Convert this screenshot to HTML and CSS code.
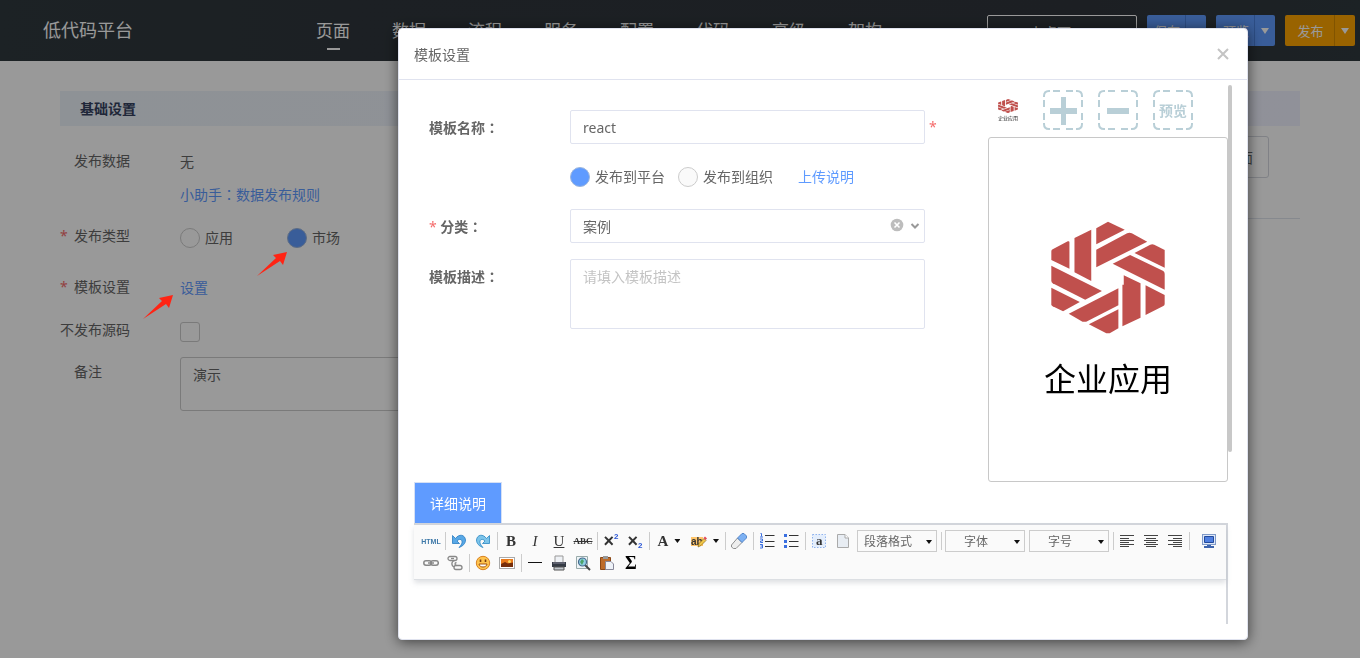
FILE: index.html
```html
<!DOCTYPE html>
<html lang="zh-CN">
<head>
<meta charset="utf-8">
<title>低代码平台</title>
<link rel="stylesheet" href="styles.css">
</head>
<body>
<svg class="defs" aria-hidden="true">
  <symbol id="logo" viewBox="66 31 340 339" preserveAspectRatio="none">
    <g fill="#c0504d">
      <path d="M67 122Q67 118 71 116L116 92Q121 90 121 95V174L67 148Z"/>
      <path d="M136 82L186 57V211L136 185Z"/>
      <path d="M201 53L236 33L286 57L201 101Z"/>
      <path d="M201 117L293 68Q300 64 307 68L353 93L201 170Z"/>
      <path d="M315 127L362 102Q368 99 374 102L405 118V171Z"/>
      <path d="M250 159L302 133L401 181Q405 184 405 189V237Z"/>
      <path d="M67 165L218 241L168 267L71 218Q67 215 67 210Z"/>
      <path d="M67 231L152 274L102 302L71 287Q67 285 67 281Z"/>
      <path d="M119 309L267 233V284L171 333H160Z"/>
      <path d="M179 341L267 296V353L241 368H231Z"/>
      <path d="M283 194L333 218V321L279 347V222H283Z"/>
      <path d="M348 224L405 253V280Q405 284 401 286L348 313Z"/>
    </g>
  </symbol>
  <symbol id="dashbox" viewBox="0 0 40 40">
    <path fill="none" stroke="#b9cfd7" stroke-width="2" d="M1 7V6Q1 1 6 1H7M10 1h7M23 1h7M33 1H34Q39 1 39 6V7M39 10v7M39 23v7M39 33V34Q39 39 34 39H33M30 39h-7M17 39h-7M7 39H6Q1 39 1 34V33M1 30v-7M1 17v-7"/>
  </symbol>
</svg>

<div class="page">
  <header class="topbar">
    <div class="brand">低代码平台</div>
    <nav class="nav">
      <a class="active" href="#">页面</a><a href="#">数据</a><a href="#">流程</a><a href="#">服务</a><a href="#">配置</a><a href="#">代码</a><a href="#">高级</a><a href="#">架构</a>
    </nav>
    <div class="actions">
      <select class="page-select" aria-label="页面选择"><option>小桌面</option></select>
      <div class="split"><button>保存</button><button aria-label="更多保存"><i class="caret"></i></button></div>
      <div class="split"><button>预览</button><button aria-label="更多预览"><i class="caret"></i></button></div>
      <div class="split publish"><button>发布</button><button aria-label="更多发布"><i class="caret"></i></button></div>
    </div>
  </header>
  <main class="content">
    <h2 class="section">基础设置</h2>
    <div class="columns">
      <form class="settings">
        <div class="row data-row"><span class="label">发布数据</span><div class="value"><div>无</div><a href="#">小助手<span class="colon" lang="zh-TW">：</span>数据发布规则</a></div></div>
        <div class="row type-row"><span class="label required">发布类型</span>
          <div class="value choices"><label><input type="radio" name="type">应用</label><label><input type="radio" name="type" checked>市场</label></div></div>
        <div class="row tpl-row"><span class="label required">模板设置</span><div class="value"><a href="#">设置</a></div></div>
        <div class="row src-row"><label class="label wide" for="nosrc">不发布源码</label><div class="value choices"><input type="checkbox" id="nosrc"></div></div>
        <div class="row"><label class="label" for="note">备注</label><div class="value"><textarea id="note">演示</textarea></div></div>
      </form>
      <div class="extra"><div class="extra-box">页面</div></div>
    </div>
  </main>
</div>

<div class="overlay"></div>
<svg class="pointer market-pointer" viewBox="0 0 30 25" aria-hidden="true"><path fill="#ff2414" d="M0 24L19 6L16 3L30 0L26 13L23 9Z"/></svg>
<svg class="pointer setup-pointer" viewBox="0 0 30 25" aria-hidden="true"><path fill="#ff2414" d="M0 24L19 6L16 3L30 0L26 13L23 9Z"/></svg>

<section class="modal" role="dialog" aria-labelledby="dlg-title">
  <header class="modal-head">
    <h1 id="dlg-title">模板设置</h1>
    <button class="close" aria-label="关闭"><svg viewBox="0 0 12 12"><path d="M1 1L11 11M11 1L1 11" stroke="#c4c4c4" stroke-width="2" fill="none"/></svg></button>
  </header>
  <div class="modal-body">
    <div class="upper">
      <form class="fields">
        <div class="field"><label for="name">模板名称<span class="colon" lang="zh-TW">：</span></label><input class="box" id="name" type="text" value="react"><span class="star">*</span></div>
        <div class="field"><span></span>
          <div class="choices scope"><label><input type="radio" name="scope" checked>发布到平台</label><label><input type="radio" name="scope">发布到组织</label><a href="#">上传说明</a></div></div>
        <div class="field"><label for="cat"><span class="star">*</span> 分类<span class="colon" lang="zh-TW">：</span></label>
          <div class="select-wrap"><select class="box" id="cat"><option>案例</option></select>
            <svg class="select-icons" viewBox="0 0 32 14" aria-hidden="true"><circle cx="7" cy="7" r="6.300" fill="#bdbdbd"/><path d="M4.500 4.500l5 5M9.500 4.500l-5 5" stroke="#fff" stroke-width="1.600"/><path d="M21.500 6l3.500 3.500L28.500 6" fill="none" stroke="#999" stroke-width="2"/></svg></div></div>
        <div class="field"><label for="desc">模板描述<span class="colon" lang="zh-TW">：</span></label><textarea class="box" id="desc" placeholder="请填入模板描述"></textarea></div>
      </form>
      <aside class="gallery">
        <div class="thumbs">
          <button class="thumb" aria-label="企业应用"><svg><use href="#logo"/></svg><span>企业应用</span></button>
          <button aria-label="添加"><svg viewBox="0 0 40 40"><use href="#dashbox"/><path fill="#b9cfd7" d="M7 18h11V7h5v11h11v6H23v11h-5V24H7z"/></svg></button>
          <button aria-label="删除"><svg viewBox="0 0 40 40"><use href="#dashbox"/><path fill="#b9cfd7" d="M9 18h22v6H9z"/></svg></button>
          <button class="preview"><svg viewBox="0 0 40 40"><use href="#dashbox"/></svg><span>预览</span></button>
        </div>
        <div class="picture"><svg><use href="#logo"/></svg><span>企业应用</span></div>
      </aside>
    </div>
    <button class="tab">详细说明</button>
    <div class="editor">
      <div class="toolbar">
        <div class="tools">
          <button class="html">HTML</button><i class="sep"></i>
          <button aria-label="撤销"><svg viewBox="0 0 16 16"><path d="M1.500 2.500v8h7L6 8C8 5.500 11.500 6 11 9.500c-.2 1.800-1.500 3.500-3 5 4-1.500 6.500-4 6.500-7.500C14 1.500 8 .5 4.500 5.500z" fill="#58a8e6" stroke="#2a7cc2" stroke-width=".8"/></svg></button>
          <button aria-label="重做"><svg viewBox="0 0 16 16"><path d="M14.500 2.500v8h-7L10 8C8 5.500 4.500 6 5 9.500c.2 1.800 1.500 3.500 3 5-4-1.500-6.500-4-6.500-7.500C2 1.500 8 .5 11.500 5.500z" fill="#7cc4ea" stroke="#2a87c2" stroke-width=".8"/></svg></button>
          <i class="sep"></i>
          <button class="serif"><b>B</b></button><button class="serif"><em>I</em></button><button class="serif"><u>U</u></button><button class="serif abc"><s>ABC</s></button>
          <i class="sep"></i>
          <button class="script-btn"><b>×</b><sup>2</sup></button><button class="script-btn"><b>×</b><sub>2</sub></button>
          <i class="sep"></i>
          <button class="serif drop">A<i class="caret dark"></i></button>
          <button class="drop" aria-label="背景色"><svg viewBox="0 0 16 16"><path fill="#ffc56b" d="M0 4h12v9H0z"/><text x="0" y="12" class="ab">ab</text><path d="M7 14l1-3.500 5-5 2 2-5 5z" fill="#f0c648" stroke="#8a6a1c" stroke-width=".7"/><path d="M12.500 5L14 3.500l2 2L14.500 7z" fill="#e0485a"/></svg><i class="caret dark"></i></button>
          <i class="sep"></i>
          <button aria-label="清除格式"><svg viewBox="0 0 16 16"><path d="M.5 12L6.500 5l4.500 4.500L5 15.500H2.500L.5 14z" fill="#eee" stroke="#777" stroke-width=".8"/><path d="M6.500 5l4.500-4.500h2l2.500 2.500v2L11 9.500z" fill="#7db1f3" stroke="#4177c0" stroke-width=".8"/></svg></button>
          <i class="sep"></i>
          <button aria-label="编号列表"><svg viewBox="0 0 16 16"><path d="M6 2.500h9.500M6 8.500h9.500M6 13.500h9.500" stroke="#333"/><path d="M1.500.5h1v3M1 4h3M1 6h2.500v2H1.500v1.500H4M1 11.500h2.500v3.500H1M1.500 13h2" fill="none" stroke="#3a6fe0"/></svg></button>
          <button aria-label="项目列表"><svg viewBox="0 0 16 16"><path d="M6 2.500h9.500M6 8.500h9.500M6 13.500h9.500" stroke="#333"/><path d="M1 1h3v3H1zM1 7h3v3H1zM1 12h3v3H1z" fill="#3a6fe0"/></svg></button>
          <i class="sep"></i>
          <button aria-label="全选"><svg viewBox="0 0 16 16"><rect x="1.500" y="1.500" width="13" height="13" fill="#e4eefc" stroke="#8fb3ee" stroke-dasharray="1.500 1.500"/><text x="5" y="12" class="sel">a</text></svg></button>
          <button aria-label="新页"><svg viewBox="0 0 16 16"><path d="M2.500 1.500H10L13.500 5v9.500h-11z" fill="#e8edf3" stroke="#aaa"/><path d="M10 1.500V5h3.500" fill="#fff" stroke="#aaa"/></svg></button>
          <span class="pick"><select aria-label="段落格式"><option>段落格式</option></select><i class="caret dark"></i></span>
          <i class="sep"></i>
          <span class="pick"><select aria-label="字体"><option>字体</option></select><i class="caret dark"></i></span>
          <span class="pick"><select aria-label="字号"><option>字号</option></select><i class="caret dark"></i></span>
          <i class="sep"></i>
          <button aria-label="左对齐"><svg viewBox="0 0 16 16"><path d="M1 2.500h14M1 5.500h9M1 7.500h14M1 9.500h9M1 11.500h14M1 13.500h9" stroke="#444"/></svg></button>
          <button aria-label="居中"><svg viewBox="0 0 16 16"><path d="M1 2.500h14M3 5.500h10M1 7.500h14M3 9.500h10M1 11.500h14M3 13.500h10" stroke="#444"/></svg></button>
          <button aria-label="右对齐"><svg viewBox="0 0 16 16"><path d="M1 2.500h14M6 5.500h9M1 7.500h14M6 9.500h9M1 11.500h14M6 13.500h9" stroke="#444"/></svg></button>
          <i class="sep"></i>
          <button class="full" aria-label="全屏"><svg viewBox="0 0 16 16"><rect x="1.500" y="1.500" width="13" height="10" fill="#dfe8f8" stroke="#7f9ac8"/><path d="M3.500 3.500h9v6h-9z" fill="#4f7fe0" stroke="#234a9a"/><path d="M6 12h4v1h3v2H3v-2h3z" fill="#3d64ad"/></svg></button>
        </div>
        <div class="tools">
          <button aria-label="链接"><svg viewBox="0 0 16 16" fill="none" stroke="#888" stroke-width="1.500"><rect x=".8" y="5.800" width="7.500" height="4.500" rx="2.200"/><rect x="7.800" y="5.800" width="7.500" height="4.500" rx="2.200"/><path d="M5 8h6"/></svg></button>
          <button aria-label="取消链接"><svg viewBox="0 0 16 16" fill="none" stroke="#888" stroke-width="1.300"><rect x="1" y="1.500" width="9" height="4" rx="2"/><path d="M4 3.500h3"/><path d="M7.500 5.500c-3.500 1-3.500 5.500 0 6.500M9.500 7.500c-2 .5-2 2.500 0 3"/><rect x="7" y="10.500" width="8" height="4" rx="2"/></svg></button>
          <i class="sep"></i>
          <button aria-label="表情"><svg viewBox="0 0 16 16"><circle cx="8" cy="8" r="6.700" fill="#ffc44e" stroke="#d98222"/><path d="M5.500 4.500v2.500M10.500 4.500v2.500" stroke="#7a3c0a" stroke-width="1.600"/><path d="M4 9h8c-.5 4-7.500 4-8 0z" fill="#fff" stroke="#a4540f"/></svg></button>
          <button aria-label="图片"><svg viewBox="0 0 16 16"><rect x=".5" y="2.500" width="15" height="11" fill="#fff" stroke="#aaa"/><path d="M2 4h12v5H2z" fill="#e8791c"/><path d="M2 9l4-2 3 1.500 5-1V12H2z" fill="#762d0a"/><circle cx="10.500" cy="6.500" r="1.500" fill="#ffdc63"/></svg></button>
          <i class="sep"></i>
          <button aria-label="横线"><svg viewBox="0 0 16 16"><path d="M1 7.500h14" stroke="#111"/></svg></button>
          <button aria-label="打印"><svg viewBox="0 0 16 16"><path d="M4 1h8v7H4z" fill="#eef1f5" stroke="#999"/><path d="M1 7h14v5H1z" fill="#353b45"/><path d="M2 8h12" stroke="#889"/><path d="M3 12h10v3H3z" fill="#c3c9cf" stroke="#555"/></svg></button>
          <button aria-label="预览"><svg viewBox="0 0 16 16"><path d="M1.500 1.500h11v12h-11z" fill="#eef4f7" stroke="#9aa"/><path d="M10 10l5 5" stroke="#444" stroke-width="2"/><circle cx="7.500" cy="7" r="4" fill="#8fd0e4" stroke="#47688a" stroke-width="1.200"/><path d="M5 7l2-3 2 2-2 4z" fill="#4ba36a"/></svg></button>
          <button aria-label="粘贴"><svg viewBox="0 0 16 16"><path d="M1.500 2.500h10v12h-10z" fill="#bd6c2b" stroke="#8a4817"/><path d="M4 1h5v3H4z" fill="#999"/><path d="M6.500 6.500H12L14.500 9v5.500h-8z" fill="#eef2f8" stroke="#889"/></svg></button>
          <button class="serif sigma" aria-label="公式">Σ</button>
        </div>
      </div>
    </div>
    <i class="scrollbar"></i>
  </div>
</section>
</body>
</html>
```

FILE: styles.css
```css
* { box-sizing: border-box; }
body { margin: 0; min-height: 100vh; overflow: hidden; background: #fff; color: #666; }
body, button, input, select, textarea { font-family: "Noto Sans", "Noto Sans CJK SC", sans-serif; font-size: 14px; }
button { padding: 0; border: 0; background: none; color: inherit; }
a { color: #5f9bff; text-decoration: none; }
textarea { display: block; resize: none; }
.defs { position: absolute; width: 0; height: 0; }
.colon { font-family: "Noto Sans CJK TC", sans-serif; }

.topbar { display: flex; align-items: flex-start; height: 61px; padding: 15px 5px 0 43px; background: linear-gradient(90deg, #2f393e, #2f363c 25%, #2f353b 80%, #2f393e); color: #fff; }
.brand { width: 273px; font-size: 18px; line-height: 31px; }
.nav { display: flex; gap: 42px; }
.nav a { display: flex; flex-direction: column; align-items: center; color: #fff; font-size: 17px; line-height: 31px; }
.nav .active::after { content: ""; width: 13px; height: 2px; margin-top: 2px; background: #fff; }
.actions { display: flex; gap: 10px; margin-left: auto; }
.page-select { width: 150px; height: 31px; padding: 3px 24px 0 0; appearance: none; border: 1px solid #fff; border-radius: 2px; background: none; color: #fff; text-align-last: center; }
.split { display: flex; height: 31px; border-radius: 2px; background: #5f9bff; color: #fff; }
.split button { width: 38px; padding-left: 2px; font-size: 13px; }
.split button + button { display: grid; place-items: center; width: 21px; padding: 1px 0 0; border-left: 1px solid #4a80dc; }
.publish { background: #ffa500; }
.publish button { width: 49px; }
.publish button + button { border-color: #d88c00; }
.caret { display: block; width: 8px; height: 6px; background: #fff; clip-path: polygon(0 0, 100% 0, 50% 100%); }
.caret.dark { width: 6px; height: 4px; background: #111; }

.content { padding: 30px 60px; }
.section { margin: 0; padding-left: 20px; background: linear-gradient(90deg, #edf3fa, #f0f2ff); color: #364260; font-size: 14px; line-height: 35px; }
.columns { display: grid; grid-template-columns: 1fr 1fr; align-items: start; padding-top: 20px; }
.settings { padding-right: 20px; }
.row { display: flex; line-height: 32px; }
.data-row { min-height: 75px; }
.type-row { min-height: 51px; }
.tpl-row { min-height: 43px; }
.src-row { min-height: 42px; }
.label { position: relative; flex: 0 0 120px; padding-left: 14px; line-height: 30px; }
.label.wide { padding-left: 0; }
.required::before { content: "*"; position: absolute; left: 0; color: #f56c6c; }
.value { flex: 1; }
.value textarea { width: 100%; height: 54px; padding: 6px 12px; border: 1px solid #ccc; border-radius: 3px; color: #666; }
.choices { display: flex; align-items: center; height: 34px; }
.choices label { display: flex; align-items: center; gap: 5px; }
.value label { width: 107px; }
.choices input { flex: none; width: 20px; height: 20px; margin: 0; appearance: none; border: 1px solid #ccc; border-radius: 50%; background: #fafafa; }
.choices input:checked { background: #5f9bff; border-color: #9bb5dd; }
.value input { background: #fff; }
.choices input[type="checkbox"] { border-radius: 3px; }
.extra { margin-top: -10px; height: 83px; border-bottom: 1px solid #dfe4ed; }
.extra-box { margin-right: 31px; height: 42px; padding-right: 15px; border: 1px solid #d5d8df; border-radius: 3px; text-align: right; line-height: 42px; }

.overlay { position: fixed; inset: 0; background: rgba(0, 0, 0, .4); }
.pointer { position: absolute; width: 30px; height: 25px; }
.market-pointer { left: 257px; top: 252px; }
.setup-pointer { left: 143px; top: 295px; }

.modal { position: fixed; top: 28px; right: 112px; bottom: 18px; left: 398px; display: flex; flex-direction: column; border: 1px solid #e0e3ef; border-radius: 4px; background: #fff; box-shadow: 0 2px 14px rgba(0, 0, 0, .6); }
.modal-head { display: flex; justify-content: space-between; align-items: center; height: 51px; padding: 0 18px 0 15px; border-bottom: 1px solid #e0e3ef; }
.modal-head h1 { margin: 0; font-size: 14px; font-weight: 400; }
.close { display: flex; }
.close svg { width: 12px; height: 12px; }
.modal-body { position: relative; flex: 1; min-height: 0; margin-bottom: 15px; padding: 0 19px 0 15px; overflow: hidden; }
.upper { display: flex; }
.fields { flex: 1; display: flex; flex-direction: column; gap: 15px; padding: 30px 0 0 15px; }
.field { display: grid; grid-template-columns: 141px 1fr 63px; min-height: 34px; line-height: 34px; }
.field > label { font-weight: 700; }
.star { color: #f56c6c; font-weight: 400; }
.box + .star { padding-left: 4px; }
.box { width: 100%; height: 34px; padding: 0 12px; border: 1px solid #e0e3ef; border-radius: 2px; background: #fff; color: #666; outline: 0; }
textarea.box { height: 70px; padding-top: 6px; }
.box::placeholder { color: #c4c4c4; }
.scope label { margin-right: 13px; }
.scope a { margin-left: 12px; }
.select-wrap { position: relative; }
.select-wrap select { display: block; appearance: none; }
.select-icons { position: absolute; right: 3px; top: 9px; width: 32px; height: 14px; }
.gallery { flex: 0 0 240px; padding-top: 10px; }
.thumbs { display: flex; gap: 15px; margin-bottom: 7px; }
.thumbs button { width: 40px; height: 40px; }
.thumbs button > svg { display: block; width: 40px; height: 40px; }
.thumbs .thumb { display: flex; flex-direction: column; align-items: center; justify-content: center; gap: 2px; }
.thumbs .thumb svg { width: 20px; height: 14px; }
.thumb span { color: #222; font-size: 5px; line-height: 7px; }
.preview { display: grid; }
.preview > * { grid-area: 1 / 1; }
.preview span { place-self: center; color: #b9cfd7; font-weight: 700; white-space: nowrap; }
.picture { display: flex; flex-direction: column; align-items: center; height: 345px; padding-top: 83px; border: 1px solid #c8c8c8; border-radius: 3px; color: #000; }
.picture svg { width: 114px; height: 113px; }
.picture span { margin-top: 20px; font-size: 32px; line-height: 50px; font-weight: 400; }
.tab { display: block; width: 88px; height: 41px; border: 1px solid #d5e0f5; border-bottom: 0; background: #5f9bff; color: #fff; }
.editor { height: 120px; border-top: 2px solid #d3d6dc; border-right: 2px solid #d3d6dc; }
.toolbar { padding: 5px; border-bottom: 1px solid #dcdfe3; background: #fafafa; box-shadow: 0 3px 5px rgba(150, 155, 165, .3); }
.tools { display: flex; align-items: center; height: 22px; }
.tools button { display: flex; align-items: center; justify-content: center; flex: none; width: 24px; height: 22px; color: #333; }
.tools svg { width: 16px; height: 16px; }
.tools .html { color: #3d78a8; font: 700 7px "Liberation Sans", sans-serif; }
.sep { flex: none; width: 1px; height: 18px; margin: 0 1px 0 2px; background: #ccc; }
.tools .serif { font: 700 15px "Liberation Serif", serif; }
.tools .serif em, .tools .serif u { font-weight: 400; }
.tools .abc { font-size: 9px; }
.tools .script-btn { font: 700 18px "Liberation Sans", sans-serif; line-height: 22px; }
.script-btn sup, .script-btn sub { align-self: flex-start; color: #2a56d6; font-size: 8px; line-height: 14px; }
.script-btn sub { align-self: flex-end; line-height: 12px; }
.tools .drop { gap: 6px; width: 36px; }
.ab { font: 700 10px "Liberation Sans", sans-serif; fill: #333; }
.sel { font: 700 13px "Liberation Serif", serif; fill: #333; }
.pick { position: relative; flex: none; margin: 0 2px; }
.pick select { display: block; width: 80px; height: 22px; padding: 1px 18px 0 0; appearance: none; border: 1px solid #ccc; background: #fafafa; color: #666; font-size: 12px; text-align-last: center; }
.pick .caret { position: absolute; right: 5px; top: 10px; }
.tools .full { margin-left: 6px; }
.tools .sigma { font-size: 18px; color: #000; }
.scrollbar { position: absolute; right: 15px; top: 5px; width: 4px; height: 367px; border-radius: 2px; background: #c8c8c8; }
```
